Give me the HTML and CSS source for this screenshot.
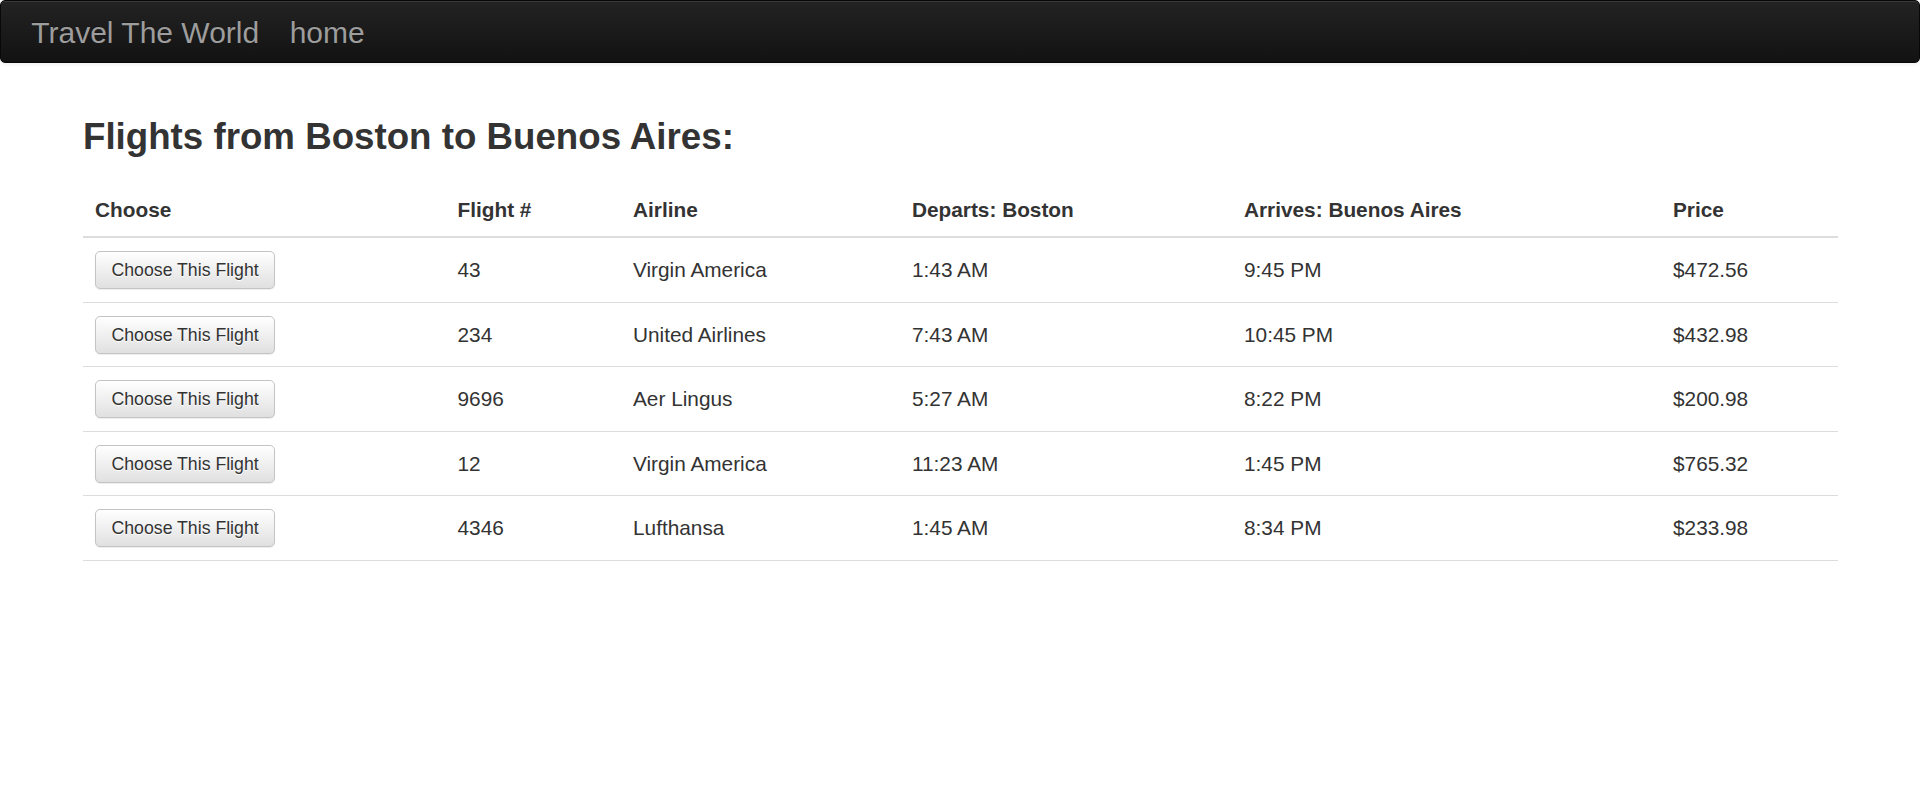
FILE: index.html
```html
<!DOCTYPE html>
<html lang="en">
<head>
<meta charset="utf-8">
<title>Travel The World</title>
<link rel="stylesheet" href="styles.css">
</head>
<body>
<nav class="navbar">
  <a class="brand" href="#">Travel The World</a>
  <a class="nav-link" href="#">home</a>
</nav>
<main class="page">
  <h2 class="title">Flights from Boston to Buenos Aires:</h2>
  <table class="flights">
    <colgroup>
      <col class="c-choose">
      <col class="c-num">
      <col class="c-airline">
      <col class="c-dep">
      <col class="c-arr">
      <col class="c-price">
    </colgroup>
    <thead>
      <tr>
        <th>Choose</th>
        <th>Flight #</th>
        <th>Airline</th>
        <th>Departs: Boston</th>
        <th>Arrives: Buenos Aires</th>
        <th>Price</th>
      </tr>
    </thead>
    <tbody>
      <tr>
        <td><button class="btn">Choose This Flight</button></td>
        <td>43</td>
        <td>Virgin America</td>
        <td>1:43 AM</td>
        <td>9:45 PM</td>
        <td>$472.56</td>
      </tr>
      <tr>
        <td><button class="btn">Choose This Flight</button></td>
        <td>234</td>
        <td>United Airlines</td>
        <td>7:43 AM</td>
        <td>10:45 PM</td>
        <td>$432.98</td>
      </tr>
      <tr>
        <td><button class="btn">Choose This Flight</button></td>
        <td>9696</td>
        <td>Aer Lingus</td>
        <td>5:27 AM</td>
        <td>8:22 PM</td>
        <td>$200.98</td>
      </tr>
      <tr>
        <td><button class="btn">Choose This Flight</button></td>
        <td>12</td>
        <td>Virgin America</td>
        <td>11:23 AM</td>
        <td>1:45 PM</td>
        <td>$765.32</td>
      </tr>
      <tr>
        <td><button class="btn">Choose This Flight</button></td>
        <td>4346</td>
        <td>Lufthansa</td>
        <td>1:45 AM</td>
        <td>8:34 PM</td>
        <td>$233.98</td>
      </tr>
    </tbody>
  </table>
</main>
</body>
</html>
```

FILE: styles.css
```css
* {
  box-sizing: border-box;
}

html, body {
  margin: 0;
  padding: 0;
  background: #fff;
}

body {
  font-family: "Liberation Sans", Arial, Helvetica, sans-serif;
  font-size: 20.8px;
  line-height: 29.7px;
  color: #333;
}

.navbar {
  display: flex;
  align-items: flex-start;
  gap: 30.5px;
  height: 62.5px;
  padding: 15px 0 0 30.3px;
  background: linear-gradient(to bottom, #232323 0%, #121212 100%);
  border: 1px solid #080808;
  border-radius: 5px;
  box-shadow: inset 0 1px 0 rgba(255, 255, 255, 0.1), 0 1px 5px rgba(0, 0, 0, 0.075);
}

.brand,
.nav-link {
  font-size: 30px;
  line-height: 33px;
  color: #9d9d9d;
  text-decoration: none;
  text-shadow: 0 -1px 0 rgba(0, 0, 0, 0.25);
}

.page {
  width: 1755px;
  margin-left: 83px;
  padding-top: 54.7px;
}

.title {
  margin: 0 0 28.8px;
  font-size: 36.7px;
  line-height: 1.1;
  font-weight: bold;
  color: #333;
}

.flights {
  width: 1755px;
  border-collapse: collapse;
  table-layout: fixed;
  font-family: "Liberation Sans", Arial, Helvetica, sans-serif;
  font-size: 20.8px;
  color: #333;
}

.c-choose { width: 361.5px; }
.c-num { width: 175.5px; }
.c-airline { width: 279px; }
.c-dep { width: 332px; }
.c-arr { width: 429px; }
.c-price { width: 178px; }

.flights th {
  text-align: left;
  font-size: 20.8px;
  font-weight: bold;
  vertical-align: bottom;
  padding: 11px 12px 14px 13px;
  line-height: 25px;
  border-bottom: 2px solid #ddd;
}

.flights td {
  font-size: 20.8px;
  padding: 12.75px 12px 12.75px 13px;
  line-height: 29.7px;
  vertical-align: middle;
  border-top: 1px solid #ddd;
  border-bottom: 1px solid #ddd;
}

.flights th:first-child,
.flights td:first-child {
  padding-left: 12px;
}

.btn {
  display: block;
  width: fit-content;
  height: 38px;
  margin: 0;
  padding: 0 15.5px;
  font-family: "Liberation Sans", Arial, Helvetica, sans-serif;
  font-size: 17.7px;
  line-height: 36px;
  color: #333;
  background: linear-gradient(to bottom, #ffffff 0%, #e0e0e0 100%);
  border: 1px solid #c4c4c4;
  border-radius: 5px;
  text-shadow: 0 1px 0 #fff;
  box-shadow: inset 0 1px 0 rgba(255, 255, 255, 0.15), 0 1px 1px rgba(0, 0, 0, 0.075);
  white-space: nowrap;
  cursor: pointer;
}
```
